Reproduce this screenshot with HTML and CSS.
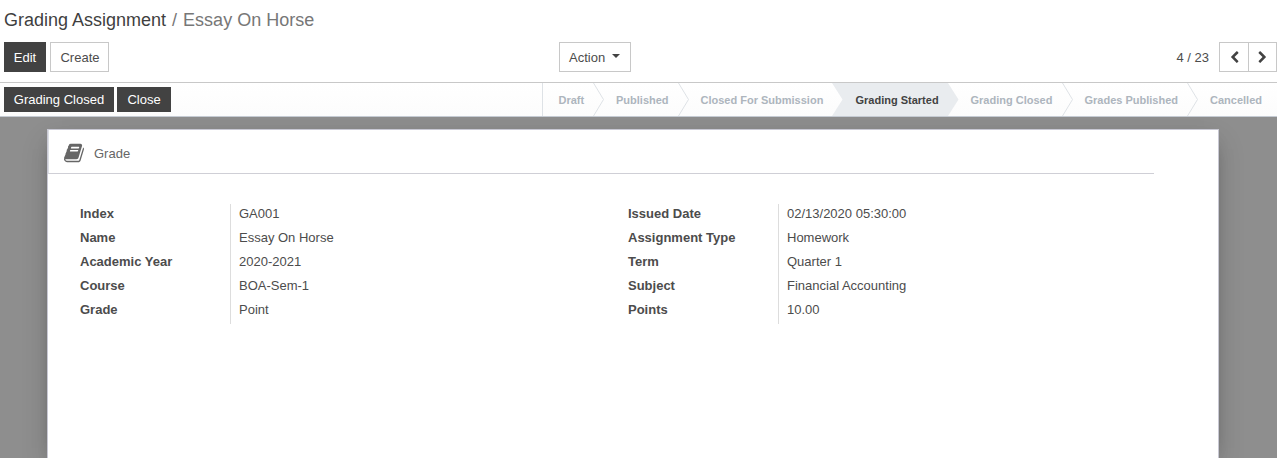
FILE: index.html
```html
<!DOCTYPE html>
<html lang="en">
<head>
<meta charset="utf-8">
<title>Grading Assignment</title>
<link rel="stylesheet" href="styles.css">
</head>
<body>
<header class="control-panel">
  <div class="breadcrumb"><span class="crumb-link">Grading Assignment</span><span class="crumb-sep">/</span><span class="crumb-current">Essay On Horse</span></div>
  <div class="toolbar">
    <div class="toolbar-left">
      <button class="btn btn-primary btn-edit">Edit</button>
      <button class="btn btn-default btn-create">Create</button>
    </div>
    <button class="btn btn-default btn-action">Action<svg class="caret" viewBox="0 0 8 4"><path d="M0 0H8L4 4Z"/></svg></button>
    <div class="pager">
      <span class="pager-count">4 / 23</span>
      <button class="btn btn-default pager-btn" aria-label="Previous"><svg viewBox="0 0 1792 1792"><path d="M1427 301l-531 531 531 531q19 19 19 45t-19 45l-166 166q-19 19-45 19t-45-19l-742-742q-19-19-19-45t19-45l742-742q19-19 45-19t45 19l166 166q19 19 19 45t-19 45z"/></svg></button>
      <button class="btn btn-default pager-btn pager-next" aria-label="Next"><svg viewBox="0 0 1792 1792"><path d="M1363 877l-742 742q-19 19-45 19t-45-19l-166-166q-19-19-19-45t19-45l531-531-531-531q-19-19-19-45t19-45l166-166q19-19 45-19t45 19l742 742q19 19 19 45t-19 45z"/></svg></button>
    </div>
  </div>
</header>
<div class="statusbar">
  <div class="status-actions">
    <button class="btn btn-primary btn-small btn-gc">Grading Closed</button>
    <button class="btn btn-primary btn-small btn-close">Close</button>
  </div>
  <div class="stages">
    <div class="stage stage-draft">Draft</div>
    <svg class="arrow" viewBox="0 0 11 33"><path d="M.5 0L10.5 16.5L.5 33"/></svg>
    <div class="stage stage-published">Published</div>
    <svg class="arrow" viewBox="0 0 11 33"><path d="M.5 0L10.5 16.5L.5 33"/></svg>
    <div class="stage stage-submission">Closed For Submission</div>
    <svg class="arrow arrow-in" viewBox="0 0 11 33"><path d="M0 0H11V33H0L10.5 16.5Z"/></svg>
    <div class="stage stage-started">Grading Started</div>
    <svg class="arrow arrow-out" viewBox="0 0 11 33"><path d="M0 0L10.5 16.5L0 33Z"/></svg>
    <div class="stage stage-closed">Grading Closed</div>
    <svg class="arrow" viewBox="0 0 11 33"><path d="M.5 0L10.5 16.5L.5 33"/></svg>
    <div class="stage stage-grades">Grades Published</div>
    <svg class="arrow" viewBox="0 0 11 33"><path d="M.5 0L10.5 16.5L.5 33"/></svg>
    <div class="stage stage-cancelled">Cancelled</div>
  </div>
</div>
<main class="form-bg">
  <section class="sheet">
    <div class="button-box">
      <svg class="book" viewBox="0 0 1664 1792"><path d="M1639 478q40 57 18 129l-275 906q-19 64-76.5 107.5t-122.5 43.5h-923q-77 0-148.500-53.500t-99.500-131.500q-24-67-2-127 0-4 3-27t4-37q1-8-3-21.500t-3-19.500q2-11 8-21t16.500-23.500 16.500-23.500q23-38 45-91.500t30-91.500q3-10 .5-30t-.5-28q3-11 17-28t17-23q21-36 42-92t25-90q1-9-2.500-32t.5-28q4-13 22-30.500t22-22.500q19-26 42.500-84.500t27.500-96.500q1-8-3-25.500t-2-26.500q2-8 9-18t18-23 17-21q8-12 16.500-30.500t15-35 16-36 19.500-32 26.500-23.500 36-11.500 47.500 5.500l-1 3q38-9 51-9h761q74 0 114 56t18 130l-274 906q-36 119-71.500 153.500t-128.500 34.500h-869q-27 0-38 15-11 16-1 43 24 70 144 70h923q29 0 56-15.500t35-41.500l300-987q7-22 5-57 38 15 59 43zm-1064 2q-4 13 2 22.500t20 9.500h608q13 0 25.500-9.500t16.500-22.500l21-64q4-13-2-22.500t-20-9.500h-608q-13 0-25.500 9.500t-16.500 22.500zm-83 256q-4 13 2 22.500t20 9.500h608q13 0 25.500-9.500t16.500-22.500l21-64q4-13-2-22.500t-20-9.500h-608q-13 0-25.500 9.500t-16.500 22.500z"/></svg>
      <span>Grade</span>
    </div>
    <div class="groups">
      <dl class="group">
        <dt>Index</dt><dd>GA001</dd>
        <dt>Name</dt><dd>Essay On Horse</dd>
        <dt>Academic Year</dt><dd>2020-2021</dd>
        <dt>Course</dt><dd>BOA-Sem-1</dd>
        <dt>Grade</dt><dd>Point</dd>
      </dl>
      <dl class="group">
        <dt>Issued Date</dt><dd>02/13/2020 05:30:00</dd>
        <dt>Assignment Type</dt><dd>Homework</dd>
        <dt>Term</dt><dd>Quarter 1</dd>
        <dt>Subject</dt><dd>Financial Accounting</dd>
        <dt>Points</dt><dd>10.00</dd>
      </dl>
    </div>
  </section>
</main>
</body>
</html>
```
FILE: styles.css
```css
* { box-sizing: border-box; }
body {
  margin: 0;
  height: 458px;
  overflow: hidden;
  display: flex;
  flex-direction: column;
  background: #fff;
  color: #4c4c4c;
  font: 13px/20px "Liberation Sans", Arial, sans-serif;
}
.control-panel {
  height: 83px;
  flex: none;
  padding: 7px 0 0 4px;
  border-bottom: 1px solid #c8c8c8;
}
.breadcrumb { font-size: 18px; line-height: 26px; height: 35px; white-space: nowrap; }
.crumb-link { color: #3f3f3f; }
.crumb-sep { padding: 0 6px; color: #777; }
.crumb-current { color: #777; }
.toolbar { display: grid; grid-template-columns: 555px 72px 1fr; height: 30px; }
.toolbar-left { display: flex; gap: 4px; }
.btn {
  display: flex;
  align-items: center;
  justify-content: center;
  margin: 0;
  padding: 2px 0 0;
  height: 30px;
  border: 1px solid #c8c8c8;
  border-radius: 0;
  font: inherit;
  white-space: nowrap;
}
.btn-primary { background: #424242; border-color: #424242; color: #fff; }
.btn-default { background: #fff; color: #4c4c4c; }
.btn-edit { width: 42px; }
.btn-create { width: 59px; padding-left: 1px; }
.btn-action { width: 72px; justify-content: flex-start; padding-left: 9px; }
.caret { width: 8px; height: 4px; margin: -5px 0 0 7px; fill: #424242; }
.pager { display: flex; justify-content: flex-end; align-items: center; }
.pager-count { margin-right: 10px; padding-top: 2px; }
.pager-btn { width: 30px; padding: 0; }
.pager-next { width: 29px; margin-left: -1px; }
.pager-btn svg { width: 13px; height: 13px; fill: #424242; }
.statusbar {
  display: flex;
  justify-content: space-between;
  flex: none;
  height: 34px;
  border-bottom: 1px solid #c5cbd3;
  background: linear-gradient(#fff, #fcfcfc);
}
.status-actions { display: flex; gap: 3px; padding: 4px 0 0 4px; }
.btn-small { height: 25px; padding: 0; }
.btn-gc { width: 110px; }
.btn-close { width: 54px; }
.stages {
  display: flex;
  width: 735px;
  height: 33px;
  border-left: 1px solid #dee2e6;
  font-size: 11px;
  font-weight: bold;
  line-height: 34px;
  color: #adb5bd;
  white-space: nowrap;
}
.stage { flex: none; }
.stage-draft { width: 50px; padding-left: 15.5px; }
.stage-published { width: 74px; padding-left: 12px; }
.stage-submission { width: 143px; padding-left: 11.5px; }
.stage-started { width: 105px; padding-left: 12.5px; background: #e9ecef; color: #424242; }
.stage-closed { width: 103px; padding-left: 11.5px; }
.stage-grades { width: 114px; padding-left: 11.5px; }
.stage-cancelled { padding-left: 12px; }
.arrow { flex: none; width: 11px; height: 33px; fill: none; stroke: #dee2e6; stroke-width: 1; }
.arrow-in, .arrow-out { fill: #e9ecef; stroke: none; }
.form-bg { flex: 1; min-height: 0; overflow: hidden; background: #8e8e8e; padding: 12px 58px 0 47px; }
.sheet {
  height: 100%;
  border: 1px solid #c8c8d3;
  border-bottom: 0;
  background: #fff;
  box-shadow: 0 5px 20px -15px #000, 0 12px 26px rgba(0, 0, 0, .13);
}
.button-box {
  display: flex;
  align-items: center;
  gap: 10px;
  width: 1106px;
  height: 44px;
  padding: 3px 0 0 15px;
  border-bottom: 1px solid #cfcfd6;
  border-left: 1px solid #dcdfe5;
  color: #666;
}
.button-box span { padding-top: 2px; }
.book { width: 20px; height: 22px; fill: #666; }
.groups { display: flex; padding: 30px 0 0 32px; }
.group {
  display: grid;
  grid-template-columns: 150px 398px;
  grid-auto-rows: 24px;
  margin: 0;
  line-height: 19px;
}
.group dt { font-weight: bold; }
.group dd { margin: 0; padding-left: 8px; border-left: 1px solid #ddd; }
```
